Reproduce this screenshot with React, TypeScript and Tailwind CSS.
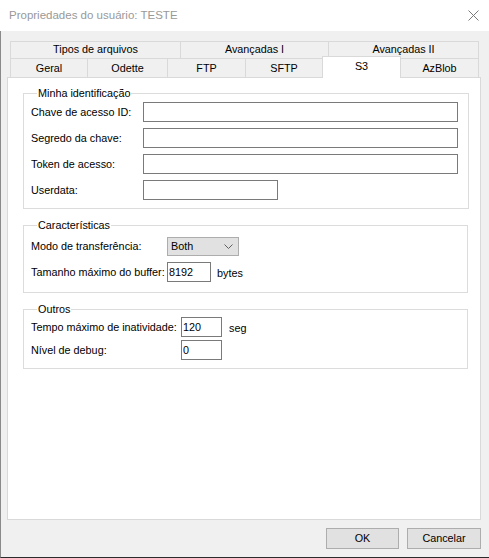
import { ReactNode } from 'react';

// Tab strip: two rows, the selected one sits in the row next to the page
const TOP_TABS = [
  { label: 'Tipos de arquivos', w: 'w-[170px]' },
  { label: 'Avançadas I', w: 'w-[148px]' },
  { label: 'Avançadas II', w: 'w-[151px]' },
];

const BOTTOM_TABS = [
  { label: 'Geral', w: 'w-[77px]' },
  { label: 'Odette', w: 'w-[80px]' },
  { label: 'FTP', w: 'w-[78px]' },
  { label: 'SFTP', w: 'w-[77px]' },
  { label: 'S3', w: 'w-[79px]', active: true },
  { label: 'AzBlob', w: 'w-[78px]' },
];

function GroupBox({ title, className, children }: { title: string; className?: string; children: ReactNode }) {
  return (
    <fieldset className={`border border-[#dcdcdc] pl-[7px] pr-[10px] ${className ?? ''}`}>
      <legend className="ml-[6px] px-[1px] leading-[14px]">{title}</legend>
      {children}
    </fieldset>
  );
}

function TextBox({ value = '', className }: { value?: string; className: string }) {
  return (
    <input
      readOnly
      value={value}
      className={`h-[20px] border border-[#7a7a7a] bg-white px-[1px] text-[10.8px] outline-none ${className}`}
    />
  );
}

function Row({ label, labelW, children }: { label: string; labelW: string; children: ReactNode }) {
  return (
    <div className="flex items-center">
      <span className={`${labelW} shrink-0 whitespace-nowrap`}>{label}</span>
      {children}
    </div>
  );
}

export default function App() {
  return (
    <div className="flex h-[558px] w-[489px] flex-col bg-[#f0f0f0] font-['Liberation_Sans',Arial,sans-serif] text-[10.8px] text-black">
      {/* Title bar (inactive) */}
      <div className="flex h-[31px] shrink-0 items-center justify-between bg-white pl-[9px] pr-[10px]">
        <span className="text-[11.5px] text-[#999999]">Propriedades do usuário: TESTE</span>
        <svg width="11" height="11" viewBox="0 0 11 11" className="text-[#7a7a7a]">
          <path d="M0.5 0.5 L10.5 10.5 M10.5 0.5 L0.5 10.5" stroke="currentColor" strokeWidth="1" fill="none" />
        </svg>
      </div>

      <div className="flex flex-1 flex-col border-b border-l border-b-[#2b2b2b] border-l-[#8a8a8a] pl-[6px] pr-[8px] pt-[10px]">
        {/* Tabs */}
        <div className="ml-[3px] mr-[2px] flex flex-col">
          <div className="flex h-[17px]">
            {TOP_TABS.map((t, i) => (
              <div
                key={t.label}
                className={`${t.w} flex items-center justify-center border-l border-t border-[#d9d9d9] pb-px ${
                  i === TOP_TABS.length - 1 ? 'border-r' : ''
                }`}
              >
                {t.label}
              </div>
            ))}
          </div>
          <div className="relative z-10 flex h-[19px] items-end">
            {BOTTOM_TABS.map((t, i) =>
              t.active ? (
                <div
                  key={t.label}
                  className={`${t.w} -mb-px flex h-[22px] items-center justify-center border-l border-r border-t border-[#d9d9d9] bg-white pb-[2px]`}
                >
                  {t.label}
                </div>
              ) : (
                <div
                  key={t.label}
                  className={`${t.w} flex h-[19px] items-center justify-center border-t border-[#d9d9d9] ${
                    BOTTOM_TABS[i - 1]?.active ? '' : 'border-l'
                  } ${i === BOTTOM_TABS.length - 1 ? 'border-r' : ''}`}
                >
                  {t.label}
                </div>
              )
            )}
          </div>
        </div>

        {/* Tab page */}
        <div className="flex h-[443px] flex-col border border-[#d9d9d9] bg-white pl-[15px] pr-[12px] pt-[8px]">
          <GroupBox title="Minha identificação" className="pb-[8px]">
            <div className="flex flex-col gap-[6px] pt-[2px]">
              <Row label="Chave de acesso ID:" labelW="w-[112px]">
                <TextBox className="w-[315px]" />
              </Row>
              <Row label="Segredo da chave:" labelW="w-[112px]">
                <TextBox className="w-[315px]" />
              </Row>
              <Row label="Token de acesso:" labelW="w-[112px]">
                <TextBox className="w-[315px]" />
              </Row>
              <Row label="Userdata:" labelW="w-[112px]">
                <TextBox className="w-[135px]" />
              </Row>
            </div>
          </GroupBox>

          <GroupBox title="Características" className="mt-[9px] pb-[10px]">
            <div className="flex flex-col gap-[6px] pt-[5px]">
              <Row label="Modo de transferência:" labelW="w-[136px]">
                <div className="flex h-[19px] w-[72px] items-center justify-between border border-[#adadad] bg-[#e1e1e1] pl-[3px] pr-[5px]">
                  <span>Both</span>
                  <svg width="9" height="5" viewBox="0 0 9 5" className="text-[#606060]">
                    <path d="M0.5 0.5 L4.5 4.5 L8.5 0.5" stroke="currentColor" strokeWidth="1" fill="none" />
                  </svg>
                </div>
              </Row>
              <Row label="Tamanho máximo do buffer:" labelW="w-[136px]">
                <TextBox value="8192" className="w-[44px]" />
                <span className="ml-[6px] pt-[3px]">bytes</span>
              </Row>
            </div>
          </GroupBox>

          <GroupBox title="Outros" className="mt-[9px] pb-[8px]">
            <div className="flex flex-col gap-[3px] pt-[1px]">
              <Row label="Tempo máximo de inatividade:" labelW="w-[150px]">
                <TextBox value="120" className="w-[41px]" />
                <span className="ml-[7px] pt-[3px]">seg</span>
              </Row>
              <Row label="Nível de debug:" labelW="w-[150px]">
                <TextBox value="0" className="w-[41px]" />
              </Row>
            </div>
          </GroupBox>
        </div>

        {/* Dialog buttons */}
        <div className="mt-[8px] flex justify-end gap-[8px]">
          <button className="h-[21px] w-[73px] border border-[#adadad] bg-[#e1e1e1]">OK</button>
          <button className="h-[21px] w-[74px] border border-[#adadad] bg-[#e1e1e1]">Cancelar</button>
        </div>
      </div>
    </div>
  );
}
